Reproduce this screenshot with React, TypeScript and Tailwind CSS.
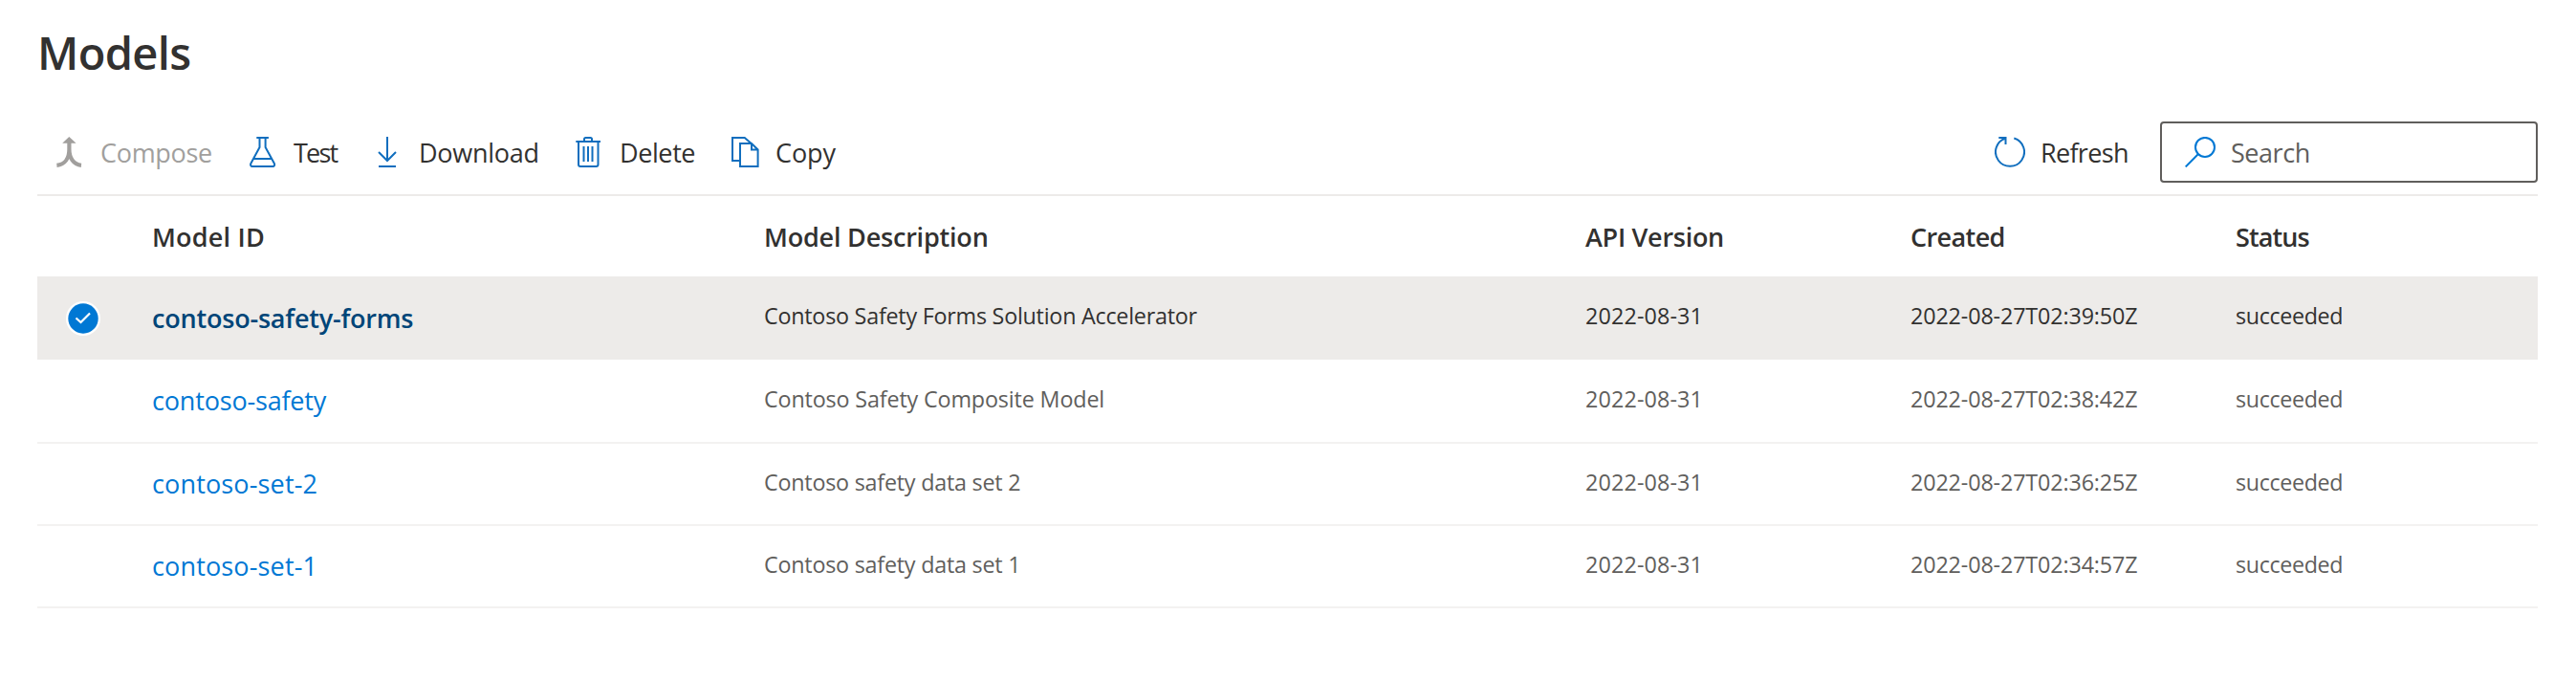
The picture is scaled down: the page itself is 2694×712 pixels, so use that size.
import type { ReactNode } from "react";

function Icon({ children, className = "text-[#106ebe]" }: { children: ReactNode; className?: string }) {
  return (
    <svg viewBox="0 0 32 32" fill="none" stroke="currentColor" strokeWidth="2" className={`size-8 shrink-0 ${className}`}>
      {children}
    </svg>
  );
}

const ComposeIcon = () => (
  <Icon className="text-[#a19f9d]">
    <path d="M16.4 5v11M16.4 13C16.4 22 12 29 3.4 29.8M16.4 13C16.4 22 20.800 29 29 29.8" strokeWidth="4.2" />
    <path d="M16.3 0 23.6 6.8H9.2Z" fill="currentColor" stroke="none" />
  </Icon>
);

const FlaskIcon = () => (
  <Icon>
    <path d="M10.3 1h12.6M13.5 1v10L4.3 28c-.7 1.4 0 3 1.6 3h21.4c1.6 0 2.3-1.6 1.6-3L19.6 11V1M7 23h19.4" />
  </Icon>
);

const DownloadIcon = () => (
  <Icon>
    <path d="M16 0v25M7 16l9 9 9-9M7 31h18" />
  </Icon>
);

const DeleteIcon = () => (
  <Icon>
    <path d="M3.3 5H29M12 5V2.5c0-1 .5-1.5 1.5-1.5h5c1 0 1.5.5 1.5 1.5V5M6 5v24c0 1.2.8 2 2 2h16.500c1.2 0 2-.8 2-2V5M11.5 10v16M16 10v16M20.5 10v16" />
  </Icon>
);

const CopyIcon = () => (
  <Icon>
    <path d="M9.5 25H2V1h12.7l7.3 6.2M10 7h12l6.6 6.5V31H10ZM22 7v6.5h6.6" />
  </Icon>
);

const RefreshIcon = () => (
  <Icon>
    <path d="M20.3 1.5A15 15 0 1 1 11.4 1.6M4.3 1H11.5V8" />
  </Icon>
);

const SearchIcon = () => (
  <Icon className="text-[#0078d4]">
    <circle cx="21" cy="10.9" r="10" />
    <path d="M14 18 .7 31.4" />
  </Icon>
);

function CommandButton({ icon, label, className }: { icon: ReactNode; label: string; className: string }) {
  return (
    <button type="button" className={`flex shrink-0 items-center whitespace-nowrap text-left text-[27px] leading-9 ${className}`}>
      {icon}
      <span className="pt-0.5">{label}</span>
    </button>
  );
}

type Model = {
  id: string;
  idClass: string;
  description: string;
  descriptionClass: string;
  created: string;
  rowClass: string;
  selected?: boolean;
};

const models: Model[] = [
  {
    id: "contoso-safety-forms",
    idClass: "font-semibold text-[#004578] tracking-[-0.2px]",
    description: "Contoso Safety Forms Solution Accelerator",
    descriptionClass: "tracking-[-0.23px]",
    created: "2022-08-27T02:39:50Z",
    rowClass: "h-[87px] bg-[#edebe9] text-[#323130]",
    selected: true,
  },
  {
    id: "contoso-safety",
    idClass: "text-[#0078d4] tracking-[-0.18px]",
    description: "Contoso Safety Composite Model",
    descriptionClass: "tracking-[-0.14px]",
    created: "2022-08-27T02:38:42Z",
    rowClass: "h-[88px] border-b-2 border-[#f3f2f1] text-[#605e5c]",
  },
  {
    id: "contoso-set-2",
    idClass: "text-[#0078d4] tracking-[0.15px]",
    description: "Contoso safety data set 2",
    descriptionClass: "tracking-[-0.22px]",
    created: "2022-08-27T02:36:25Z",
    rowClass: "h-[86px] border-b-2 border-[#f3f2f1] text-[#605e5c]",
  },
  {
    id: "contoso-set-1",
    idClass: "text-[#0078d4] tracking-[0.15px]",
    description: "Contoso safety data set 1",
    descriptionClass: "tracking-[-0.22px]",
    created: "2022-08-27T02:34:57Z",
    rowClass: "h-[86px] border-b-2 border-[#f3f2f1] text-[#605e5c]",
  },
];

const columns = "grid grid-cols-[120px_640px_859px_340px_340px_1fr] items-center whitespace-nowrap";

export default function App() {
  return (
    <main className="flex h-[712px] flex-col bg-white pr-10 pl-[39px] font-['Open_Sans','Noto_Sans',sans-serif] text-[#323130]">
      <h1 className="flex h-[109px] items-center pt-px text-[47px] font-semibold tracking-[-0.65px]">Models</h1>

      <div className="mt-1.5 flex h-[90px] items-center border-b-2 border-[#edebe9] pl-[17px]">
        <CommandButton icon={<ComposeIcon />} label="Compose" className="w-[202px] gap-[17px] tracking-[-0.3px] text-[#a19f9d]" />
        <CommandButton icon={<FlaskIcon />} label="Test" className="w-[131px] gap-[17px] tracking-[-1.8px]" />
        <CommandButton icon={<DownloadIcon />} label="Download" className="w-[210px] gap-[17px] tracking-[-0.27px]" />
        <CommandButton icon={<DeleteIcon />} label="Delete" className="w-[165px] gap-[17px] tracking-[-0.4px]" />
        <CommandButton icon={<CopyIcon />} label="Copy" className="gap-[15px] tracking-[-0.1px]" />
        <div className="ml-auto flex items-center">
          <CommandButton icon={<RefreshIcon />} label="Refresh" className="w-[173px] gap-4 tracking-[-0.68px]" />
          <div className="flex h-16 w-[395px] items-center gap-4 rounded-[4px] border-2 border-[#605e5c] pl-6 text-[27px] leading-9 tracking-[-0.45px] text-[#605e5c]">
            <SearchIcon />
            <span className="pt-0.5">Search</span>
          </div>
        </div>
      </div>

      <div className={`h-[84px] pt-px text-[27px] leading-9 font-semibold ${columns}`}>
        <span />
        <span className="tracking-[0.2px]">Model ID</span>
        <span className="tracking-[-0.2px]">Model Description</span>
        <span className="tracking-[-0.28px]">API Version</span>
        <span className="tracking-[-0.6px]">Created</span>
        <span className="tracking-[-0.92px]">Status</span>
      </div>

      {models.map((m) => (
        <div key={m.id} className={`${columns} text-[23.3px] leading-8 ${m.rowClass}`}>
          <span className="pl-[30px]">
            {m.selected && (
              <svg viewBox="0 0 36 36" className="size-9">
                <circle cx="18" cy="18" r="18" fill="#fff" />
                <circle cx="18" cy="18" r="15.7" fill="#0078d4" />
                <path d="m10.5 17.5 5 4.5 9.5-9.5" fill="none" stroke="#fff" strokeWidth="2.2" />
              </svg>
            )}
          </span>
          <a className={`text-[27px] leading-9 ${m.idClass}`}>{m.id}</a>
          <span className={`pb-[5px] ${m.descriptionClass}`}>{m.description}</span>
          <span className="pb-[5px] tracking-[0.15px]">2022-08-31</span>
          <span className="pb-[5px] tracking-[-0.12px]">{m.created}</span>
          <span className="pb-[5px] tracking-[-0.36px]">succeeded</span>
        </div>
      ))}
    </main>
  );
}
